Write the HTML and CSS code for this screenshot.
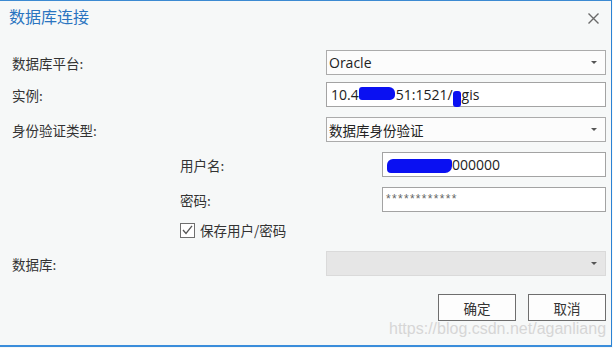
FILE: index.html
```html
<!DOCTYPE html>
<html lang="zh-CN">
<head>
<meta charset="utf-8">
<title>数据库连接</title>
<link rel="stylesheet" href="styles.css">
</head>
<body>
<div class="dialog">
  <div class="titlebar">
    <span class="title">数据库连接</span>
    <svg class="close" width="11" height="11" viewBox="0 0 11 11"><path d="M0.5 0.5 L10.5 10.5 M10.5 0.5 L0.5 10.5" stroke="#6a6a6a" stroke-width="1.4" fill="none"/></svg>
  </div>
  <div class="form">
    <div class="row r1">
      <span class="lbl">数据库平台:</span>
      <div class="combo"><span class="latin">Oracle</span><span class="arrow"></span></div>
    </div>
    <div class="row r2">
      <span class="lbl">实例:</span>
      <div class="input latin">10.4<span class="blob b1"></span>51:1521/<span class="blob b2"></span>gis</div>
    </div>
    <div class="row r3">
      <span class="lbl">身份验证类型:</span>
      <div class="combo"><span>数据库身份验证</span><span class="arrow"></span></div>
    </div>
    <div class="row r4 indent">
      <span class="lbl sub">用户名:</span>
      <div class="input latin user"><span class="blob b3"></span>000000</div>
    </div>
    <div class="row r5 indent">
      <span class="lbl sub">密码:</span>
      <div class="input pwd">************</div>
    </div>
    <div class="row r6 indent">
      <span class="check"><svg width="11" height="10" viewBox="0 0 11 10"><path d="M1 5 L4 8.5 L10 0.8" stroke="#555" stroke-width="1.3" fill="none"/></svg></span>
      <span class="checklbl">保存用户/密码</span>
    </div>
    <div class="row r7">
      <span class="lbl">数据库:</span>
      <div class="combo disabled"><span></span><span class="arrow"></span></div>
    </div>
  </div>
  <div class="buttons">
    <button class="btn">确定</button>
    <button class="btn">取消</button>
  </div>
  <div class="watermark">https://blog.csdn.net/aganliang</div>
</div>
</body>
</html>
```
FILE: styles.css
```css
html, body {
  margin: 0;
  padding: 0;
}
body {
  background: #f6f8f8;
  font-family: "Noto Sans CJK SC", "Noto Sans", sans-serif;
  color: #333;
  width: 613px;
  height: 348px;
  overflow: hidden;
}
.dialog {
  position: relative;
  box-sizing: border-box;
  width: 612px;
  height: 347px;
  background: #f6f8f8;
  border-top: 1px solid #3c8ad2;
  border-right: 1px solid #2b82d4;
  border-bottom: 2px solid #3a8ddb;
}
.titlebar {
  display: flex;
  justify-content: space-between;
  align-items: center;
  height: 30px;
  padding: 0 12px 0 9px;
}
.title {
  font-size: 16px;
  line-height: 22px;
  color: #2a74c0;
  margin-top: -1px;
}
.close {
  margin-top: 4px;
}
.form {
  display: flex;
  flex-direction: column;
  padding: 0 5px 0 12px;
}
.row {
  display: flex;
  align-items: center;
  height: 25px;
}
.r1 { margin-top: 19px; }
.r2 { margin-top: 7px; }
.r3, .r4, .r5 { margin-top: 10px; }
.r6 { margin-top: 10px; height: 16px; }
.r7 { margin-top: 13px; }
.indent { padding-left: 168px; }
.lbl {
  width: 314px;
  flex: none;
  font-size: 13.5px;
  color: #333;
}
.lbl.sub { width: 202px; }
.combo, .input {
  flex: 1;
  box-sizing: border-box;
  height: 25px;
  display: flex;
  align-items: center;
  border: 1px solid #ababab;
  background: #fcfcfc;
  font-size: 13.5px;
  color: #222;
}
.combo {
  justify-content: space-between;
  padding: 0 8px 0 2px;
}
.combo.disabled {
  background: #e6e6e6;
  border-color: #dadada;
}
.latin {
  font-family: "Open Sans", "Noto Sans", sans-serif;
  font-size: 14px;
  color: #222;
}
.input {
  background: #fff;
  border-color: #a3a3a3;
  padding: 0 4px;
  white-space: pre;
}
.arrow {
  width: 0;
  height: 0;
  border-left: 3px solid transparent;
  border-right: 3px solid transparent;
  border-top: 3px solid #555;
}
.blob {
  display: inline-block;
  background: #0a10f2;
  border-radius: 4px;
}
.b1 { width: 36px; height: 13px; margin: 0 1px 0 0; position: relative; top: -1px; border-radius: 3px 6px 5px 3px; }
.b2 { width: 8px; height: 16px; margin: 0 1px 0 0; position: relative; top: 4px; border-radius: 3px; }
.b3 { width: 65px; height: 14px; margin-right: 0; position: relative; top: 1px; border-radius: 6px 3px 7px 4px; }
.pwd {
  font-family: "Liberation Sans", sans-serif;
  font-size: 12px;
  color: #666;
  padding-left: 3px;
  letter-spacing: 1.3px;
  align-items: flex-start;
  padding-top: 4px;
}
.check {
  box-sizing: border-box;
  width: 15px;
  height: 15px;
  border: 1px solid #6f6f6f;
  background: #fff;
  display: flex;
  align-items: center;
  justify-content: center;
  margin-right: 5px;
}
.checklbl {
  font-size: 13.5px;
  color: #333;
}
.buttons {
  display: flex;
  justify-content: flex-end;
  gap: 12px;
  margin-top: 18px;
  padding-right: 5px;
}
.btn {
  box-sizing: border-box;
  width: 78px;
  height: 27px;
  border: 1px solid #6e6e6e;
  background: #fdfdfd;
  font-family: "Noto Sans CJK SC", sans-serif;
  font-size: 13.5px;
  color: #333;
  padding: 0;
  margin: 0;
}
.watermark {
  position: absolute;
  left: 389px;
  top: 319px;
  font-family: "Liberation Sans", Arial, sans-serif;
  font-size: 16px;
  line-height: 18px;
  color: #d6d6d6;
  white-space: nowrap;
}
```
